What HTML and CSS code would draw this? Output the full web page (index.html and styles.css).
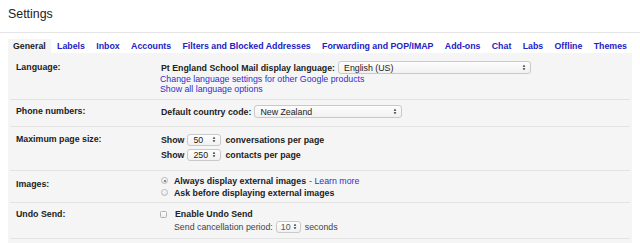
FILE: index.html
```html
<!DOCTYPE html>
<html lang="en">
<head>
  <meta charset="UTF-8" />
  <title>Settings</title>
  <link rel="stylesheet" href="styles.css">
</head>
<body>

  <header class="title">Settings</header>

  <nav class="tabs">
    <span class="tab active">General</span>
    <a class="tab">Labels</a>
    <a class="tab">Inbox</a>
    <a class="tab">Accounts</a>
    <a class="tab">Filters and Blocked Addresses</a>
    <a class="tab">Forwarding and POP/IMAP</a>
    <a class="tab">Add-ons</a>
    <a class="tab">Chat</a>
    <a class="tab">Labs</a>
    <a class="tab">Offline</a>
    <a class="tab">Themes</a>
  </nav>

  <main class="panel">

    <div class="row row-language">
      <div class="label">Language:</div>
      <div class="value">
        <div class="line tall">
          <b>Pt England School Mail display language:</b>
          <span class="select select-lang">English (US)
            <svg class="arrows" viewBox="0 0 4 8"><polygon points="0.4,3.2 2,0.8 3.6,3.2"/><polygon points="0.4,4.8 2,7.2 3.6,4.8"/></svg>
          </span>
        </div>
        <a class="link">Change language settings for other Google products</a>
        <a class="link">Show all language options</a>
      </div>
    </div>

    <div class="row row-phone">
      <div class="label">Phone numbers:</div>
      <div class="value">
        <div class="line tall">
          <b>Default country code:</b>
          <span class="select select-country">New Zealand
            <svg class="arrows" viewBox="0 0 4 8"><polygon points="0.4,3.2 2,0.8 3.6,3.2"/><polygon points="0.4,4.8 2,7.2 3.6,4.8"/></svg>
          </span>
        </div>
      </div>
    </div>

    <div class="row row-size">
      <div class="label">Maximum page size:</div>
      <div class="value">
        <div class="line tall">
          <b>Show</b>
          <span class="select select-num">50
            <svg class="arrows" viewBox="0 0 4 8"><polygon points="0.4,3.2 2,0.8 3.6,3.2"/><polygon points="0.4,4.8 2,7.2 3.6,4.8"/></svg>
          </span>
          <b>conversations per page</b>
        </div>
        <div class="line tall">
          <b>Show</b>
          <span class="select select-num">250
            <svg class="arrows" viewBox="0 0 4 8"><polygon points="0.4,3.2 2,0.8 3.6,3.2"/><polygon points="0.4,4.8 2,7.2 3.6,4.8"/></svg>
          </span>
          <b>contacts per page</b>
        </div>
      </div>
    </div>

    <div class="row row-images">
      <div class="label">Images:</div>
      <div class="value">
        <div class="line option">
          <span class="radio checked"></span>
          <b>Always display external images</b>
          <a class="link learn">- Learn more</a>
        </div>
        <div class="line option">
          <span class="radio"></span>
          <b>Ask before displaying external images</b>
        </div>
      </div>
    </div>

    <div class="row row-undo">
      <div class="label">Undo Send:</div>
      <div class="value">
        <div class="line option">
          <span class="checkbox"></span>
          <b>Enable Undo Send</b>
        </div>
        <div class="line tall sub">
          <span class="muted">Send cancellation period:</span>
          <span class="select select-small">10
            <svg class="arrows" viewBox="0 0 4 8"><polygon points="0.4,3.2 2,0.8 3.6,3.2"/><polygon points="0.4,4.8 2,7.2 3.6,4.8"/></svg>
          </span>
          <span class="muted">seconds</span>
        </div>
      </div>
    </div>

  </main>

</body>
</html>
```

FILE: styles.css
```css
body {
  margin: 0;
  font-family: "Liberation Sans", Arial, sans-serif;
  font-size: 8.8px;
  color: #222;
  background: #fff;
  overflow: hidden;
}

.title {
  height: 25px;
  padding: 7px 8px 0;
  font-size: 12.4px;
  line-height: 14px;
  border-bottom: 1px solid #e5e5e5;
}

.tabs {
  display: flex;
  justify-content: space-between;
  margin: 6px 8px 0;
}

.tab {
  padding: 0 5px;
  line-height: 14px;
  font-weight: bold;
  color: #2222c4;
  cursor: pointer;
}

.tab.active {
  background: #f5f5f5;
  color: #222;
}

.panel {
  margin: 0 8px;
  min-height: 200px;
  background: #f5f5f5;
}

.row {
  display: grid;
  grid-template-columns: 144px 1fr;
  margin: 0 2px;
  padding-left: 6px;
  border-bottom: 1px solid #e3e3e3;
}

.row-language { padding-top: 8px; padding-bottom: 5px; }
.row-phone    { padding-top: 5px; padding-bottom: 8px; }
.row-size     { padding-top: 6px; padding-bottom: 9px; }
.row-images   { padding-top: 4px; padding-bottom: 4px; }
.row-undo     { padding-top: 5px; padding-bottom: 5px; }

.label {
  font-weight: bold;
  line-height: 10px;
  padding-top: 1px;
}

.row-images .label { padding-top: 4px; }

.value {
  display: flex;
  flex-direction: column;
  align-items: flex-start;
  line-height: 10px;
}

.line {
  display: flex;
  align-items: center;
  white-space: nowrap;
}

.line.tall { height: 13px; }
.row-size .line.tall + .line.tall { margin-top: 2px; }

.line.option { height: 11.7px; }

.line b { padding-left: 1px; }

.link {
  color: #3030cc;
  cursor: pointer;
}

.learn { margin-left: 3px; }

.muted { color: #444; padding-left: 1px; }

.select {
  display: inline-flex;
  align-items: center;
  justify-content: space-between;
  box-sizing: border-box;
  height: 13px;
  margin: 0 3px;
  padding: 0 4px 0 5px;
  border: 1px solid #c9c9c9;
  border-radius: 3px;
  background: linear-gradient(#fdfdfd, #f1f1f1);
  font-weight: normal;
  color: #222;
}

.select-lang { width: 193px; }
.select-country { width: 148px; }
.select-num { width: 34px; height: 12px; }
.select-small { width: 25px; height: 12px; padding-left: 4px; padding-right: 3px; color: #555; }

.arrows {
  width: 4px;
  height: 7px;
  fill: #333;
}

.radio {
  width: 7px;
  height: 7px;
  box-sizing: border-box;
  margin: 0 5px 0 1px;
  border: 1px solid #b8b8b8;
  border-radius: 50%;
  background: linear-gradient(#fbfbfb, #e6e6e6);
  position: relative;
}

.radio.checked::after {
  content: "";
  position: absolute;
  left: 1.5px;
  top: 1.5px;
  width: 2px;
  height: 2px;
  border-radius: 50%;
  background: #666;
}

.checkbox {
  width: 7px;
  height: 7px;
  box-sizing: border-box;
  margin: 0 7px 0 0;
  border: 1px solid #b0b0b0;
  border-radius: 1.5px;
  background: linear-gradient(#fefefe, #ededed);
}

.sub { padding-left: 13px; }
```
